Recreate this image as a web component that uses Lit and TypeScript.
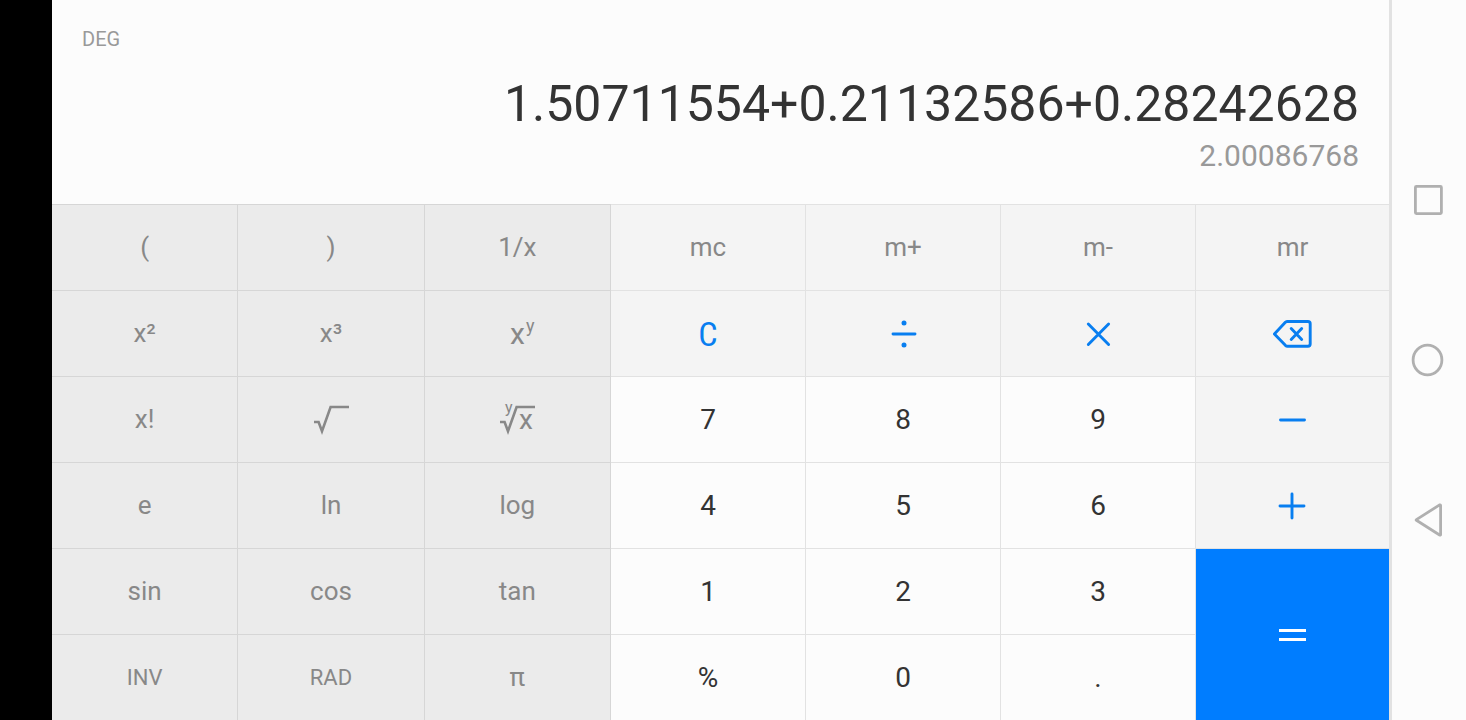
import { LitElement, html, svg, css, TemplateResult } from "lit";
import { customElement, state } from "lit/decorators.js";
import { classMap } from "lit/directives/class-map.js";

type Kind = "fn" | "mem" | "digit" | "equals";

interface Key {
  label: string;
  kind: Kind;
  small?: boolean;
  clear?: boolean;
  face?: TemplateResult;
}

const icon = (body: TemplateResult) => html`
  <svg class="icon" width="40" height="40" viewBox="0 0 40 40" aria-hidden="true">${body}</svg>
`;

const divideIcon = icon(svg`
  <path d="M10 21H32"/>
  <circle class="dot" cx="21" cy="10" r="2.5"/>
  <circle class="dot" cx="21" cy="32" r="2.5"/>`);
const timesIcon = icon(svg`<path d="M10.3 11L30.6 31.5M30.6 11L10.3 31.5"/>`);
const backspaceIcon = icon(svg`
  <path d="M1.4 21L12.6 9.1Q13.4 8.5 14.4 8.5H34.9Q37.2 8.5 37.2 10.7V31.1Q37.2 33.3 34.9 33.3H14.4Q13.4 33.3 12.6 32.6Z"/>
  <path d="M18.2 15.5L28.7 26.5M28.7 15.5L18.2 26.5"/>`);
const minusIcon = icon(svg`<path d="M7.5 21H31.5"/>`);
const plusIcon = icon(svg`<path d="M7 21H31M19 9V33"/>`);
const equalsIcon = icon(svg`<path class="flat" d="M6 16.5H33M6 25.5H33"/>`);
const rootIcon = icon(svg`<path class="thin" d="M3 23H7.6L11 32.2L19.6 8H38"/>`);
const powerFace = icon(svg`
  <text class="power-base" x="13" y="31">x</text>
  <text class="power-exp" x="29" y="19">y</text>`);
const rootOfFace = icon(svg`
  <path class="thin" d="M3 23H7.6L11 32.2L19.6 8H38"/>
  <text class="root-base" x="22" y="30">x</text>
  <text class="root-index" x="8" y="14">y</text>`);

const KEYS: Key[] = [
  { label: "(", kind: "fn" },
  { label: ")", kind: "fn" },
  { label: "1/x", kind: "fn" },
  { label: "mc", kind: "mem" },
  { label: "m+", kind: "mem" },
  { label: "m-", kind: "mem" },
  { label: "mr", kind: "mem" },

  { label: "x²", kind: "fn" },
  { label: "x³", kind: "fn" },
  { label: "x to the power y", kind: "fn", face: powerFace },
  { label: "C", kind: "mem", clear: true },
  { label: "Divide", kind: "mem", face: divideIcon },
  { label: "Multiply", kind: "mem", face: timesIcon },
  { label: "Backspace", kind: "mem", face: backspaceIcon },

  { label: "x!", kind: "fn" },
  { label: "Square root", kind: "fn", face: rootIcon },
  { label: "Root y of x", kind: "fn", face: rootOfFace },
  { label: "7", kind: "digit" },
  { label: "8", kind: "digit" },
  { label: "9", kind: "digit" },
  { label: "Minus", kind: "mem", face: minusIcon },

  { label: "e", kind: "fn" },
  { label: "ln", kind: "fn" },
  { label: "log", kind: "fn" },
  { label: "4", kind: "digit" },
  { label: "5", kind: "digit" },
  { label: "6", kind: "digit" },
  { label: "Plus", kind: "mem", face: plusIcon },

  { label: "sin", kind: "fn" },
  { label: "cos", kind: "fn" },
  { label: "tan", kind: "fn" },
  { label: "1", kind: "digit" },
  { label: "2", kind: "digit" },
  { label: "3", kind: "digit" },
  { label: "Equals", kind: "equals", face: equalsIcon },

  { label: "INV", kind: "fn", small: true },
  { label: "RAD", kind: "fn", small: true },
  { label: "π", kind: "fn" },
  { label: "%", kind: "digit" },
  { label: "0", kind: "digit" },
  { label: ".", kind: "digit" },
];

@customElement("calc-display")
class CalcDisplay extends LitElement {
  @state() private mode = "DEG";
  @state() private expression = "1.50711554+0.21132586+0.28242628";
  @state() private result = "2.00086768";

  static styles = css`
    :host {
      display: flex;
      flex-direction: column;
      padding: 24px 30px 26px;
    }
    .mode {
      font-size: 20px;
      line-height: 30px;
      color: #999;
      margin-bottom: 20px;
    }
    .expression,
    .result {
      text-align: right;
    }
    .expression {
      font-size: 50px;
      line-height: 60px;
      color: #333;
    }
    .result {
      font-size: 30px;
      line-height: 44px;
      color: #999;
    }
  `;

  render() {
    return html`
      <div class="mode">${this.mode}</div>
      <div class="expression">${this.expression}</div>
      <output class="result">${this.result}</output>
    `;
  }
}

@customElement("calc-keypad")
class CalcKeypad extends LitElement {
  static styles = css`
    :host {
      display: grid;
      grid-template-columns: repeat(3, 559fr) repeat(3, 585fr) 579fr;
      grid-template-rows: repeat(6, minmax(56px, 1fr));
    }
    .key {
      display: flex;
      align-items: center;
      justify-content: center;
      min-width: 0;
      margin: 0;
      padding: 0 0 1px;
      border: 0 solid #e2e2e2;
      border-width: 1px 1px 0 0;
      font: inherit;
      font-size: 26px;
      cursor: pointer;
    }
    .key:nth-child(7),
    .key:nth-child(14),
    .key:nth-child(21),
    .key:nth-child(28),
    .key:nth-child(35) {
      border-right: 0;
    }
    .fn {
      background: #ebebeb;
      border-color: #d6d6d6;
      color: #888;
    }
    .mem {
      background: #f4f4f4;
      color: #888;
    }
    .digit {
      padding: 0;
      background: #fcfcfc;
      color: #333;
      font-size: 28px;
    }
    .small {
      padding: 0;
      font-size: 22px;
    }
    .clear {
      padding: 0;
      color: #087ef0;
      font-family: "Roboto Condensed", Roboto, sans-serif;
      font-size: 34px;
    }
    .equals {
      grid-row: span 2;
      background: #007dff;
      color: #fff;
    }
    .icon {
      display: block;
      fill: none;
      stroke: #087ef0;
      stroke-width: 2.9;
      stroke-linecap: round;
      stroke-linejoin: round;
    }
    .dot {
      fill: #087ef0;
      stroke: none;
    }
    .flat {
      stroke: #fff;
      stroke-width: 3;
      stroke-linecap: butt;
    }
    .thin {
      stroke: #888;
      stroke-width: 2.6;
      stroke-linecap: butt;
      stroke-linejoin: miter;
    }
    text {
      fill: #888;
      stroke: none;
    }
    .power-base {
      font-size: 30px;
    }
    .power-exp {
      font-size: 18px;
    }
    .root-base {
      font-size: 28px;
    }
    .root-index {
      font-size: 16px;
    }
  `;

  render() {
    return KEYS.map(
      (key) => html`
        <button
          type="button"
          class=${classMap({ key: true, [key.kind]: true, small: !!key.small, clear: !!key.clear })}
          aria-label=${key.label}
        >${key.face ?? key.label}</button>
      `
    );
  }
}

@customElement("system-nav")
class SystemNav extends LitElement {
  static styles = css`
    :host {
      display: flex;
      flex-direction: column;
      align-items: center;
      justify-content: center;
      gap: 120px;
      border-left: 3px solid #e2e2e2;
      background: #fcfcfc;
    }
    .nav {
      margin: 0;
      padding: 0;
      border: 0;
      background: none;
      cursor: pointer;
    }
    svg {
      display: block;
      fill: none;
      stroke: #b0b0b0;
      stroke-width: 2.8;
      stroke-linejoin: round;
    }
  `;

  render() {
    return html`
      <button type="button" class="nav" aria-label="Recent apps">
        <svg width="40" height="40" viewBox="0 0 40 40"><rect x="6.4" y="6.4" width="26" height="27.2" rx="1"/></svg>
      </button>
      <button type="button" class="nav" aria-label="Home">
        <svg width="40" height="40" viewBox="0 0 40 40"><ellipse cx="18.5" cy="20" rx="14.4" ry="14.9"/></svg>
      </button>
      <button type="button" class="nav" aria-label="Back">
        <svg width="40" height="40" viewBox="0 0 40 40"><path d="M7.4 20.3Q6.8 20 7.4 19.6L30.6 4.9Q31.6 4.5 31.6 5.5V34.4Q31.6 35.5 30.6 35Z"/></svg>
      </button>
    `;
  }
}

@customElement("app-root")
class AppRoot extends LitElement {
  static styles = css`
    :host {
      display: grid;
      grid-template-columns: 52px 1fr 77px;
      min-height: 100vh;
      background: #fcfcfc;
      font-family: Roboto, "Noto Sans", sans-serif;
    }
    .cutout {
      background: #000;
    }
    .calculator {
      display: flex;
      flex-direction: column;
      min-width: 0;
    }
    .keypad {
      flex: 1;
    }
    system-nav {
      box-sizing: border-box;
    }
  `;

  render() {
    return html`
      <div class="cutout"></div>
      <main class="calculator">
        <calc-display></calc-display>
        <calc-keypad class="keypad"></calc-keypad>
      </main>
      <system-nav></system-nav>
    `;
  }
}
